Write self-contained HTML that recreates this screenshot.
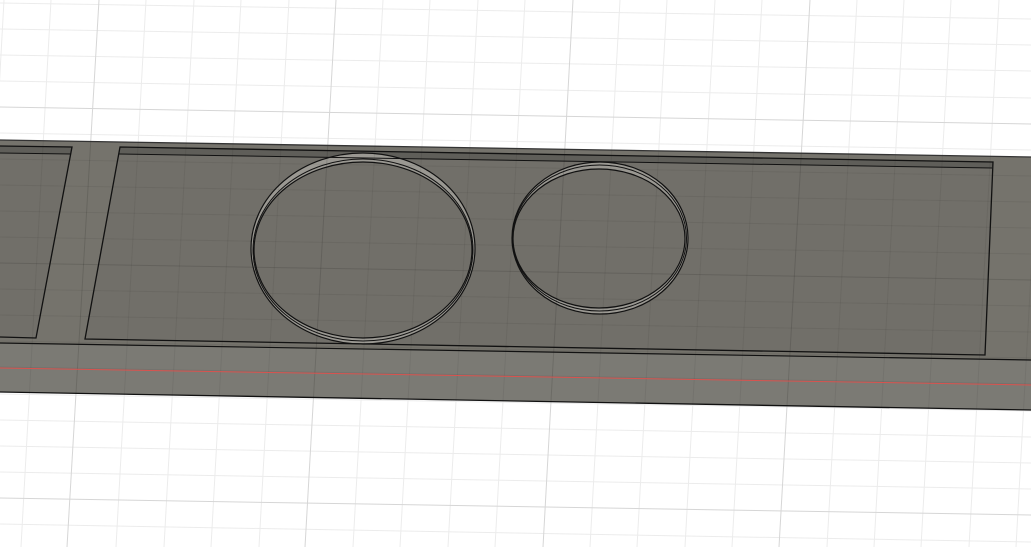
<!DOCTYPE html>
<html><head><style>html,body{margin:0;padding:0;background:#fff;width:1031px;height:547px;overflow:hidden}</style></head>
<body>
<svg width="1031" height="547" viewBox="0 0 1031 547" xmlns="http://www.w3.org/2000/svg">
<defs>
<g id="minor">
    <line x1="4" y1="0" x2="-26" y2="547"/>
    <line x1="51" y1="0" x2="21" y2="547"/>
    <line x1="146" y1="0" x2="116" y2="547"/>
    <line x1="194" y1="0" x2="164" y2="547"/>
    <line x1="241" y1="0" x2="211" y2="547"/>
    <line x1="289" y1="0" x2="259" y2="547"/>
    <line x1="383" y1="0" x2="353" y2="547"/>
    <line x1="430" y1="0" x2="400" y2="547"/>
    <line x1="478" y1="0" x2="448" y2="547"/>
    <line x1="525" y1="0" x2="495" y2="547"/>
    <line x1="620" y1="0" x2="590" y2="547"/>
    <line x1="667" y1="0" x2="637" y2="547"/>
    <line x1="715" y1="0" x2="685" y2="547"/>
    <line x1="762" y1="0" x2="732" y2="547"/>
    <line x1="857" y1="0" x2="827" y2="547"/>
    <line x1="904" y1="0" x2="874" y2="547"/>
    <line x1="951" y1="0" x2="921" y2="547"/>
    <line x1="999" y1="0" x2="969" y2="547"/>
    <line x1="1046" y1="0" x2="1016" y2="547"/>
    <line x1="0" y1="3" x2="1031" y2="19"/>
    <line x1="0" y1="29" x2="1031" y2="45"/>
    <line x1="0" y1="55" x2="1031" y2="71"/>
    <line x1="0" y1="81" x2="1031" y2="98"/>
    <line x1="0" y1="133" x2="1031" y2="150"/>
    <line x1="0" y1="159" x2="1031" y2="176"/>
    <line x1="0" y1="185" x2="1031" y2="202"/>
    <line x1="0" y1="211" x2="1031" y2="228"/>
    <line x1="0" y1="237" x2="1031" y2="254"/>
    <line x1="0" y1="289" x2="1031" y2="306"/>
    <line x1="0" y1="315" x2="1031" y2="332"/>
    <line x1="0" y1="341" x2="1031" y2="358"/>
    <line x1="0" y1="367" x2="1031" y2="384"/>
    <line x1="0" y1="394" x2="1031" y2="411"/>
    <line x1="0" y1="420" x2="1031" y2="437"/>
    <line x1="0" y1="446" x2="1031" y2="463"/>
    <line x1="0" y1="472" x2="1031" y2="489"/>
    <line x1="0" y1="524" x2="1031" y2="542"/>
</g>
<g id="major">
    <line x1="99" y1="0" x2="67" y2="547"/>
    <line x1="336" y1="0" x2="305" y2="547"/>
    <line x1="573" y1="0" x2="543" y2="547"/>
    <line x1="810" y1="0" x2="779" y2="547"/>
    <line x1="0" y1="107" x2="1031" y2="124"/>
    <line x1="0" y1="263" x2="1031" y2="280"/>
    <line x1="0" y1="498" x2="1031" y2="515"/>
</g>
</defs>
<use href="#minor" stroke="#ececec" stroke-width="1"/>
<use href="#major" stroke="#d6d6d6" stroke-width="1"/>
<!-- slab top -->
<polygon points="0,140 1031,157 1031,360 0,343" fill="#75736c"/>
<!-- front face -->
<polygon points="0,343 1031,360 1031,410 0,392" fill="#7b7a74"/>
<!-- pocket 1 -->
<polygon points="0,146 72,147 71,154 0,153" fill="#5f5e59"/>
<polygon points="0,153 71,154 36,338 0,337" fill="#716f69"/>
<!-- pocket 2 -->
<polygon points="120,147 993,162 992,168 119,154" fill="#5f5e59"/>
<polygon points="119,154 992,168 985,355 85,339" fill="#716f69"/>
<!-- big circle ring fill -->
<ellipse cx="363" cy="248.5" rx="112" ry="95.5" fill="#9a9892"/>
<ellipse cx="363" cy="250" rx="109" ry="88" fill="#716f69"/>
<ellipse cx="600" cy="238" rx="88" ry="76" fill="#9a9892"/>
<ellipse cx="599" cy="238.5" rx="86" ry="69.5" fill="#716f69"/>
<!-- dark grid on slab -->
<clipPath id="slab"><polygon points="0,140 1031,157 1031,410 0,392"/></clipPath>
<g clip-path="url(#slab)">
  <use href="#minor" stroke="#000" stroke-opacity="0.06" stroke-width="1"/>
  <use href="#major" stroke="#000" stroke-opacity="0.12" stroke-width="1"/>
</g>
<!-- edges -->
<line x1="0" y1="140" x2="1031" y2="157" stroke="#333" stroke-width="1.3"/>
<line x1="0" y1="392" x2="1031" y2="410" stroke="#111" stroke-width="1.3"/>
<line x1="0" y1="343" x2="1031" y2="360" stroke="#111" stroke-width="1.2"/>
<line x1="0" y1="368" x2="1031" y2="385" stroke="#d9534f" stroke-width="1"/>
<polyline points="0,146 72,147 36,338 0,337" fill="none" stroke="#111" stroke-width="1.3"/>
<line x1="0" y1="153" x2="71" y2="154" stroke="#111" stroke-width="1"/>
<polygon points="120,147 993,162 985,355 85,339" fill="none" stroke="#111" stroke-width="1.3"/>
<line x1="119" y1="154" x2="992" y2="168" stroke="#111" stroke-width="1"/>
<ellipse cx="363" cy="248.5" rx="112" ry="95.5" fill="none" stroke="#111" stroke-width="1.2"/>
<ellipse cx="363" cy="250" rx="110" ry="91" fill="none" stroke="#111" stroke-width="1"/>
<ellipse cx="363" cy="250" rx="109" ry="88" fill="none" stroke="#111" stroke-width="1.2"/>
<ellipse cx="600" cy="238" rx="88" ry="76" fill="none" stroke="#111" stroke-width="1.2"/>
<ellipse cx="599.5" cy="238" rx="87" ry="73" fill="none" stroke="#111" stroke-width="1"/>
<ellipse cx="599" cy="238.5" rx="86" ry="69.5" fill="none" stroke="#111" stroke-width="1.2"/>
</svg>
</body></html>
